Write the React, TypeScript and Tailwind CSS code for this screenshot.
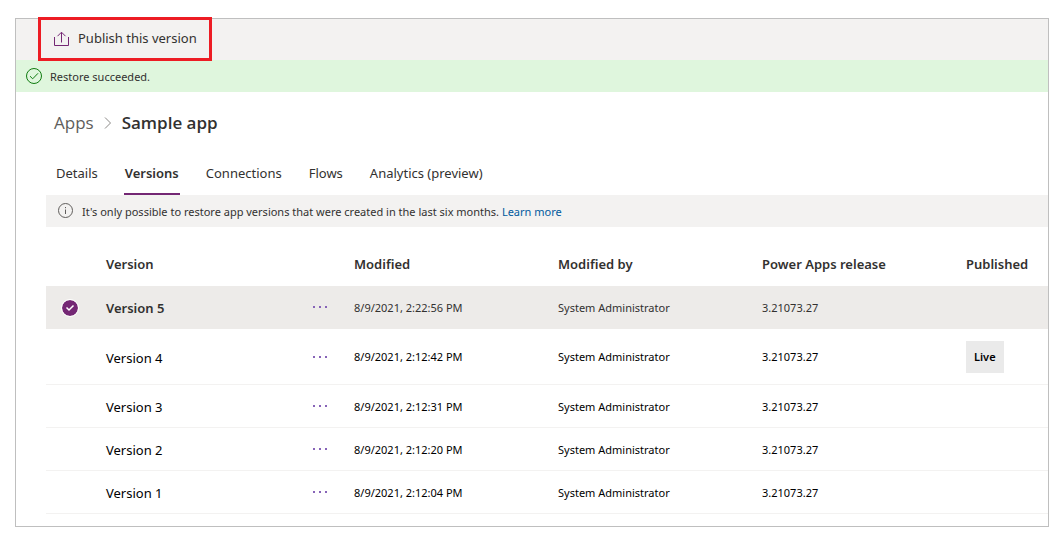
import { useState } from "react";

const tabs = ["Details", "Versions", "Connections", "Flows", "Analytics (preview)"];

const versions = [
  { name: "Version 5", modified: "8/9/2021, 2:22:56 PM", by: "System Administrator", release: "3.21073.27", live: false },
  { name: "Version 4", modified: "8/9/2021, 2:12:42 PM", by: "System Administrator", release: "3.21073.27", live: true },
  { name: "Version 3", modified: "8/9/2021, 2:12:31 PM", by: "System Administrator", release: "3.21073.27", live: false },
  { name: "Version 2", modified: "8/9/2021, 2:12:20 PM", by: "System Administrator", release: "3.21073.27", live: false },
  { name: "Version 1", modified: "8/9/2021, 2:12:04 PM", by: "System Administrator", release: "3.21073.27", live: false },
];

function PublishIcon() {
  return (
    <svg width="16" height="16" viewBox="0 0 16 16" fill="none" stroke="#742774" aria-hidden="true">
      <path d="M.5 6v8.500h14V6" />
      <path d="M7.500 11.500V1.500M3.500 5.200l4-4 4 4" />
    </svg>
  );
}

function SuccessIcon() {
  return (
    <svg width="16" height="16" viewBox="0 0 16 16" fill="none" stroke="#107c10" aria-hidden="true">
      <circle cx="8" cy="8" r="7.5" />
      <path d="M4 8.2l2.7 2.6L12 5.3" />
    </svg>
  );
}

function InfoIcon() {
  return (
    <svg width="16" height="16" viewBox="0 0 16 16" fill="none" stroke="#605e5c" aria-hidden="true">
      <circle cx="7.5" cy="7.5" r="7" />
      <path d="M7.500 6.500v4.500M7.500 4v1.200" />
    </svg>
  );
}

function Toolbar() {
  return (
    <div className="flex h-[41px] items-start bg-[#f3f2f1] pl-6">
      <button
        type="button"
        className="relative z-10 m-px flex h-[38px] items-center gap-2 pr-3 pl-[13px] text-[13px] text-[#323130] outline-3 outline-[#ed1c24]"
      >
        <PublishIcon />
        Publish this version
      </button>
    </div>
  );
}

function Breadcrumb() {
  return (
    <nav
      aria-label="Breadcrumb"
      className="flex items-center gap-2 px-[38px] pt-4 font-['Open_Sans','Noto_Sans',sans-serif] text-[17px] leading-7"
    >
      <a href="#apps" className="pt-px text-[#605e5c]">
        Apps
      </a>
      <svg width="12" height="12" viewBox="0 0 12 12" fill="none" stroke="#8a8886" aria-hidden="true">
        <path d="M3 .5L8.500 6 3 11.500" />
      </svg>
      <h1 className="pt-px font-semibold text-[#323130]">Sample app</h1>
    </nav>
  );
}

export default function App() {
  const [tab, setTab] = useState("Versions");
  const [selected, setSelected] = useState("Version 5");

  return (
    <div className="bg-white px-[14px] pt-[18px] pb-3 font-['Noto_Sans','Open_Sans',sans-serif] text-[#323130]">
      <main className="ml-px border border-[#bfbfbf] pb-3">
        <Toolbar />

        <div role="status" className="flex h-8 items-center gap-2 bg-[#dff6dd] px-[10px] text-[11px]">
          <SuccessIcon />
          <span className="pt-0.5">Restore succeeded.</span>
        </div>

        <Breadcrumb />

        <div role="tablist" className="mt-[15px] flex h-[43px] gap-[25px] px-[39px] text-[13px]">
          {tabs.map((item) => (
            <button
              key={item}
              type="button"
              role="tab"
              aria-selected={tab === item}
              onClick={() => setTab(item)}
              className={`border-b-2 px-px pt-0.5 ${
                tab === item ? "border-[#742774] font-semibold" : "border-transparent"
              }`}
            >
              {item}
            </button>
          ))}
        </div>

        <div className="ml-[30px]">
          <div className="flex h-8 items-center gap-2 bg-[#f3f2f1] px-3 text-[11px]">
            <InfoIcon />
            <p className="pt-0.5">
              It's only possible to restore app versions that were created in the last six months.{" "}
              <a href="#learn-more" className="text-[#005a9e]">
                Learn more
              </a>
            </p>
          </div>

          <table className="mt-4 w-full table-fixed border-separate border-spacing-0 text-left text-[11px]">
            <colgroup>
              <col className="w-[52px]" />
              <col className="w-[206px]" />
              <col className="w-[42px]" />
              <col className="w-[204px]" />
              <col className="w-[204px]" />
              <col className="w-[204px]" />
              <col />
            </colgroup>
            <thead>
              <tr className="h-[43px] text-[13px] [&>th]:px-2 [&>th]:font-semibold">
                <td />
                <th scope="col">Version</th>
                <td />
                <th scope="col">Modified</th>
                <th scope="col">Modified by</th>
                <th scope="col">Power Apps release</th>
                <th scope="col">Published</th>
              </tr>
            </thead>
            <tbody>
              {versions.map((v) => {
                const active = v.name === selected;
                return (
                  <tr
                    key={v.name}
                    className={`[&>td]:border-b [&>td]:px-2 ${v.live ? "h-14" : "h-[43px]"} ${
                      active ? "bg-[#edebe9] [&>td]:border-[#edebe9]" : "text-black [&>td]:border-[#f3f2f1]"
                    }`}
                  >
                    <td className="pt-0.5">
                      <label className="relative ml-2 block size-4">
                        <input
                          type="checkbox"
                          aria-label={v.name}
                          checked={active}
                          onChange={() => setSelected(active ? "" : v.name)}
                          className="block size-4 appearance-none rounded-full checked:bg-[#742774] checked:outline checked:outline-white"
                        />
                        {active && (
                          <svg viewBox="0 0 16 16" fill="none" stroke="white" strokeWidth="1.5" className="absolute inset-0" aria-hidden="true">
                            <path d="M4.500 7.500L7 10l4.500-4.500" />
                          </svg>
                        )}
                      </label>
                    </td>
                    <td className={`pt-1 text-[13px] ${active ? "font-semibold" : ""}`}>{v.name}</td>
                    <td>
                      <button type="button" aria-label={`More commands for ${v.name}`} className="block">
                        <svg width="16" height="16" viewBox="0 0 16 16" fill="#8764b8" aria-hidden="true">
                          <path d="M1 7h2v2H1zM7 7h2v2H7zM13 7h2v2h-2z" />
                        </svg>
                      </button>
                    </td>
                    <td className="pt-0.5">{v.modified}</td>
                    <td className="pt-0.5">{v.by}</td>
                    <td className="pt-0.5">{v.release}</td>
                    <td>
                      {v.live && (
                        <span className="flex h-8 w-fit items-center bg-[#eaeaea] px-2 pt-0.5 font-semibold">Live</span>
                      )}
                    </td>
                  </tr>
                );
              })}
            </tbody>
          </table>
        </div>
      </main>
    </div>
  );
}
